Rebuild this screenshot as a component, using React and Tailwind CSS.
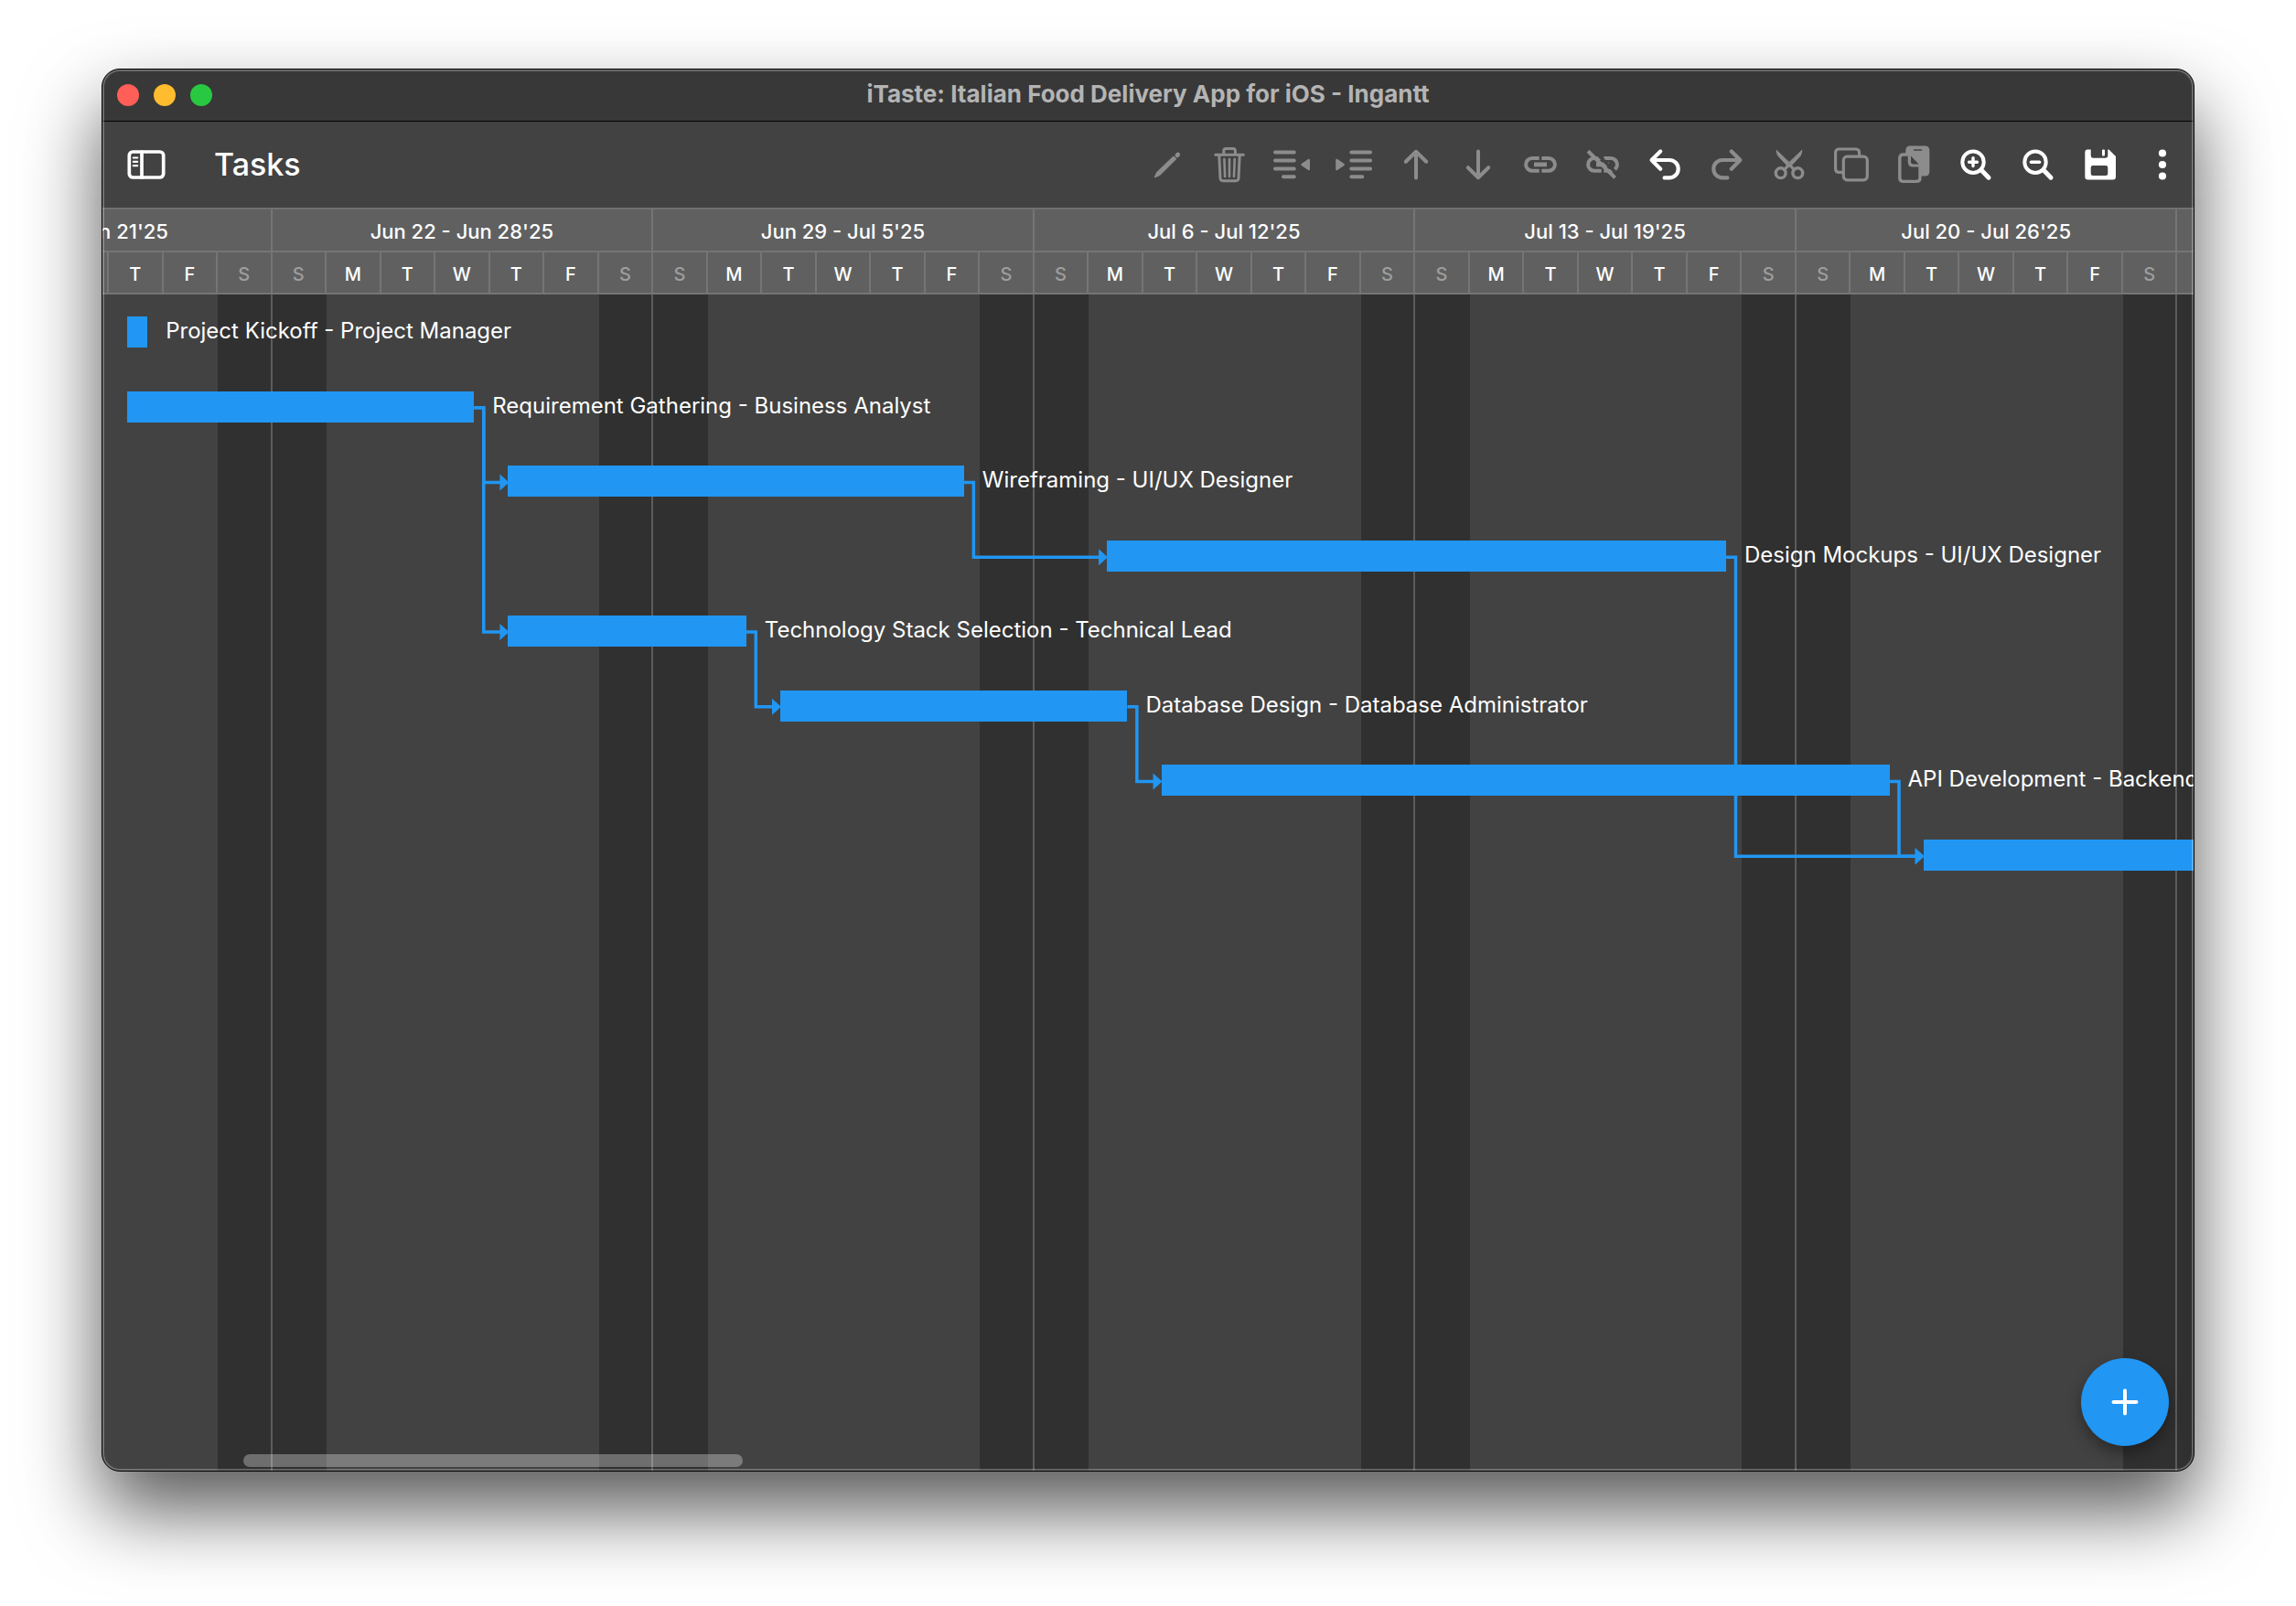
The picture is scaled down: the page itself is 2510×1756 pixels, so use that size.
import React from "react";

const DAYS = ["S", "M", "T", "W", "T", "F", "S"];
const WEEKS = [
  "Jun 15 - Jun 21'25",
  "Jun 22 - Jun 28'25",
  "Jun 29 - Jul 5'25",
  "Jul 6 - Jul 12'25",
  "Jul 13 - Jul 19'25",
  "Jul 20 - Jul 26'25",
  "Jul 27 - Aug 2'25",
];
const TOTAL_DAYS = WEEKS.length * 7;
const CHART_W = 2916;
const CHART_H = 654;
const ROW_H = CHART_H / 8;

// A working day runs from 8:00 to 17:00.
const startOf = (day) => day + 8 / 24;
const endOf = (day) => day + 17 / 24;

const TASKS = [
  { label: "Project Kickoff - Project Manager", from: 4, to: 4 },
  { label: "Requirement Gathering - Business Analyst", from: 4, to: 10 },
  { label: "Wireframing - UI/UX Designer", from: 11, to: 19 },
  { label: "Design Mockups - UI/UX Designer", from: 22, to: 33 },
  { label: "Technology Stack Selection - Technical Lead", from: 11, to: 15 },
  { label: "Database Design - Database Administrator", from: 16, to: 22 },
  { label: "API Development - Backend Developer", from: 23, to: 36 },
  { label: "", from: 37, to: 47 },
];

const LINKS = [
  [1, 2],
  [1, 4],
  [2, 3],
  [4, 5],
  [5, 6],
  [3, 7],
  [6, 7],
];

function Icon({ children }) {
  return (
    <svg viewBox="0 0 48 48" className="size-12" fill="none" stroke="currentColor" strokeLinecap="round" strokeLinejoin="round" aria-hidden="true">
      {children}
    </svg>
  );
}

const ring = (
  <>
    <path d="M22.7 17H15a6.9 6.9 0 0 0 0 13.8h7.7M25.3 17H33a6.9 6.9 0 0 1 0 13.8h-7.7" />
    <path d="M17 23.9h14" strokeWidth="4.6" />
  </>
);

const TOOLS = [
  {
    name: "Edit",
    icon: (
      <>
        <path d="M31 15.3 33.4 17.8 15.5 35.4 10.6 37.6 12.6 32.9Z" fill="currentColor" strokeWidth="1.4" />
        <path d="M35 13.7 35.7 13" strokeWidth="4.8" />
      </>
    ),
  },
  {
    name: "Delete",
    icon: (
      <>
        <path d="M8.8 13.2h30.6M12.8 14 14 39q.2 2.7 3 2.7h14q2.8 0 3-2.7L35.2 14M17.8 12.5V9q0-2.6 2.6-2.6h7.4q2.6 0 2.6 2.6v3.5" strokeWidth="3" />
        <path d="M18.4 18l.7 19M24 18v19M29.7 18l-.7 19" strokeWidth="2.6" />
      </>
    ),
  },
  {
    name: "Outdent",
    icon: (
      <>
        <path d="M6 10.5h20.8M6 19.5h20.8M6 28.5h20.8M15 37.3h11.8" strokeWidth="4" />
        <path d="M35.5 24 42.8 19v10Z" fill="currentColor" strokeWidth="2.4" />
      </>
    ),
  },
  {
    name: "Indent",
    icon: (
      <>
        <path d="M21.3 10.5h20.8M21.3 19.5h20.8M21.3 28.5h20.8M21.3 37.3h12" strokeWidth="4" />
        <path d="M12.7 24 5.4 19v10Z" fill="currentColor" strokeWidth="2.4" />
      </>
    ),
  },
  { name: "Move up", icon: <path d="M24 38.5V10M12.8 20.8 24 9.8l11.2 11" strokeWidth="4" /> },
  { name: "Move down", icon: <path d="M24 9.5V38M12.8 27.2 24 38.2l11.2-11" strokeWidth="4" /> },
  {
    name: "Link",
    icon: (
      <g strokeLinecap="butt" strokeWidth="4">
        {ring}
      </g>
    ),
  },
  {
    name: "Unlink",
    icon: (
      <g strokeLinecap="butt" strokeWidth="4">
        {ring}
        <path d="M11.5 5.8 41 35.3" stroke="#424242" strokeWidth="3.4" />
        <path d="M8 9.3 37.6 38.4" />
      </g>
    ),
  },
  { name: "Undo", on: true, icon: <path d="M19.2 9.4 9.6 19l9.6 9.7M9.8 19H29a9.7 9.7 0 0 1 0 19.4h-5.4" strokeWidth="4.2" /> },
  { name: "Redo", icon: <path d="M28.8 9.4 38.4 19l-9.6 9.7M38.2 19H19a9.7 9.7 0 0 0 0 19.4h5.4" strokeWidth="4.2" /> },
  {
    name: "Cut",
    icon: (
      <>
        <circle cx="14.7" cy="33.2" r="5.4" strokeWidth="3.4" />
        <circle cx="33.3" cy="33.2" r="5.4" strokeWidth="3.4" />
        <path d="M10.2 8.4 25.6 23 22.6 26 12 14.6Q10.2 12 10.2 8.4ZM37.8 8.4 22.4 23l3 3L36 14.6Q37.8 12 37.8 8.4Z" fill="currentColor" strokeWidth="1" />
        <path d="M24 24 18.4 29.6M24 24l5.6 5.6" strokeWidth="3.2" />
      </>
    ),
  },
  {
    name: "Copy",
    icon: (
      <>
        <path d="M32.6 13V11q0-4-4-4H10.6q-4 0-4 4v17.4q0 4 4 4h3" strokeWidth="3.2" />
        <rect x="15.3" y="15.2" width="26" height="25.6" rx="4" strokeWidth="3.2" />
      </>
    ),
  },
  {
    name: "Paste",
    icon: (
      <>
        <rect x="15.3" y="3.5" width="26" height="33" rx="4.5" fill="currentColor" stroke="none" />
        <path d="M24.5 8h8" stroke="#424242" strokeWidth="1.4" />
        <path d="M8.8 17q0-4 4-4h6.6V21q0 3.8 3.8 3.8h7.8v13.6q0 4-4 4H12.8q-4 0-4-4Z" fill="#424242" strokeWidth="3.4" />
        <path d="M21 14.5V21q0 2.4 2.4 2.4h6.200Z" fill="#424242" stroke="none" />
      </>
    ),
  },
  {
    name: "Zoom in",
    on: true,
    icon: (
      <>
        <circle cx="21" cy="21.2" r="11.7" strokeWidth="4" />
        <path d="M31 31 38 38.2" strokeWidth="5" />
        <path d="M16.6 21.2h8.8M21 16.8v8.8" strokeWidth="3.4" />
      </>
    ),
  },
  {
    name: "Zoom out",
    on: true,
    icon: (
      <>
        <circle cx="21" cy="21.2" r="11.7" strokeWidth="4" />
        <path d="M31 31 38 38.2" strokeWidth="5" />
        <path d="M16.4 21.2h9.2" strokeWidth="3.4" />
      </>
    ),
  },
  {
    name: "Save",
    on: true,
    icon: (
      <>
        <path
          d="M10.3 7.5h3.4V14q0 2.8 2.8 2.8h13q2.8 0 2.8-2.8V7.5h1.2L41 15v22.3q0 3.2-3.2 3.2H10.5q-3.2 0-3.2-3.2V10.5q0-3 3-3ZM16 25q-2.3 0-2.3 2.3v6.4Q13.7 36 16 36h14q2.3 0 2.3-2.3v-6.4Q32.3 25 30 25Z"
          fill="currentColor"
          stroke="none"
          fillRule="evenodd"
        />
        <rect x="26" y="7.5" width="3" height="7" rx="1" fill="currentColor" stroke="none" />
      </>
    ),
  },
  {
    name: "More",
    on: true,
    icon: (
      <g fill="currentColor" stroke="none">
        <circle cx="24" cy="11.5" r="4.1" />
        <circle cx="24" cy="24" r="4.1" />
        <circle cx="24" cy="36.5" r="4.1" />
      </g>
    ),
  },
];

function TitleBar() {
  return (
    <header className="grid h-[57px] shrink-0 grid-cols-[1fr_auto_1fr] items-center border-b border-black bg-[#383838] px-4">
      <div className="flex gap-4">
        <button aria-label="Close" className="size-6 rounded-full bg-[#ff5f57]" />
        <button aria-label="Minimize" className="size-6 rounded-full bg-[#febc2e]" />
        <button aria-label="Zoom window" className="size-6 rounded-full bg-[#28c840]" />
      </div>
      <h1 className="pb-0.5 text-[26px] leading-8 font-bold text-[#b4b4b4]">iTaste: Italian Food Delivery App for iOS - Ingantt</h1>
    </header>
  );
}

function Toolbar() {
  return (
    <div className="flex h-[94px] shrink-0 items-center justify-between pl-6">
      <div className="flex items-center gap-[50px]">
        <button aria-label="Toggle sidebar" className="text-white">
          <Icon>
            <rect x="5.3" y="10" width="37.4" height="28" rx="4" strokeWidth="3.7" />
            <path d="M19 10v28" strokeWidth="3.7" />
            <path d="M9.8 16.5h4.4M9.8 20.8h4.4M9.8 25.2h4.4" strokeWidth="2.2" />
          </Icon>
        </button>
        <h2 className="text-[34px] leading-10 font-medium text-white">Tasks</h2>
      </div>
      <div className="flex">
        {TOOLS.map((t) => (
          <button
            key={t.name}
            aria-label={t.name}
            disabled={!t.on}
            className="flex h-17 w-17 items-center justify-center text-white disabled:text-[#8c8c8c]"
          >
            <Icon>{t.icon}</Icon>
          </button>
        ))}
      </div>
    </div>
  );
}

function TimelineHeader() {
  return (
    <div className="grid shrink-0 grid-cols-7 border-t-2 border-[#717171] bg-[#606060] text-white">
      {WEEKS.map((week) => (
        <div key={week}>
          <div className="flex h-[47px] items-center justify-center border-r-2 border-b-2 border-[#757575] pt-1 text-[22px] font-medium">{week}</div>
          <div className="grid h-[46px] grid-cols-7 border-b-2 border-[#757575] text-xl font-medium">
            {DAYS.map((d, i) => (
              <div
                key={i}
                className={
                  i % 6 === 0
                    ? "flex items-center justify-center border-r-2 border-[#757575] pt-1 text-[#9e9e9e]"
                    : "flex items-center justify-center border-r-2 border-[#757575] pt-1"
                }
              >
                {d}
              </div>
            ))}
          </div>
        </div>
      ))}
    </div>
  );
}

function Connectors() {
  const px = (d) => (d / TOTAL_DAYS) * CHART_W;
  const mid = (row) => row * ROW_H + ROW_H / 2 + 1;
  return (
    <svg viewBox={`0 0 ${CHART_W} ${CHART_H}`} className="absolute inset-0 size-full" fill="none" stroke="#2196f3" strokeWidth="3.5" aria-hidden="true">
      {LINKS.map(([a, b]) => {
        const x1 = px(endOf(TASKS[a].to));
        const x2 = px(startOf(TASKS[b].from));
        return (
          <g key={`${a}-${b}`}>
            <path d={`M${x1} ${mid(a)}H${x1 + 10.5}V${mid(b)}H${x2 - 6}`} />
            <path d={`M${x2 + 1} ${mid(b)}l-10 -9v18Z`} fill="#2196f3" stroke="none" />
          </g>
        );
      })}
    </svg>
  );
}

function Chart() {
  return (
    <div className="relative grow">
      <div className="absolute inset-0 grid grid-cols-7">
        {WEEKS.map((week) => (
          <div key={week} className="grid grid-cols-7">
            <div className="bg-[#303030]" />
            <div className="col-start-7 border-r-2 border-[#5c5c5c] bg-[#303030]" />
          </div>
        ))}
      </div>
      <div className="relative grid h-[654px] grid-rows-8">
        {TASKS.map((t) => (
          <div key={t.from + t.label} className="flex items-center gap-5">
            <div
              className="h-[34px] shrink-0 bg-[#2196f3]"
              style={{
                marginLeft: `${(startOf(t.from) / TOTAL_DAYS) * 100}%`,
                width: `${((endOf(t.to) - startOf(t.from)) / TOTAL_DAYS) * 100}%`,
              }}
            />
            <span className="relative z-10 pb-0.5 text-2xl whitespace-nowrap text-white">{t.label}</span>
          </div>
        ))}
        <Connectors />
      </div>
    </div>
  );
}

export default function App() {
  return (
    <div className="flex min-h-screen bg-white px-[111px] pt-[75px] pb-[147px] font-['Inter',sans-serif]">
      <main className="relative flex min-w-0 grow flex-col overflow-hidden rounded-[20px] border border-black bg-[#424242] shadow-[0_42px_84px_rgba(0,0,0,0.66)]">
        <TitleBar />
        <Toolbar />
        <section aria-label="Timeline" className="flex grow overflow-hidden">
          <div className="-ml-[231px] flex w-[2916px] shrink-0 flex-col">
            <TimelineHeader />
            <Chart />
          </div>
        </section>
        <div className="absolute bottom-1 left-[154px] h-3.5 w-[546px] rounded-full bg-white/30" />
        <button
          aria-label="Add task"
          className="absolute right-[27px] bottom-[27px] flex size-24 items-center justify-center rounded-full bg-[#2196f3] text-white shadow-[0_8px_16px_rgba(0,0,0,0.35)]"
        >
          <Icon>
            <path d="M11.5 24h25M24 11.5v25" strokeWidth="4" />
          </Icon>
        </button>
        <div className="pointer-events-none absolute inset-0 rounded-[19px] border-2 border-white/25" />
      </main>
    </div>
  );
}
